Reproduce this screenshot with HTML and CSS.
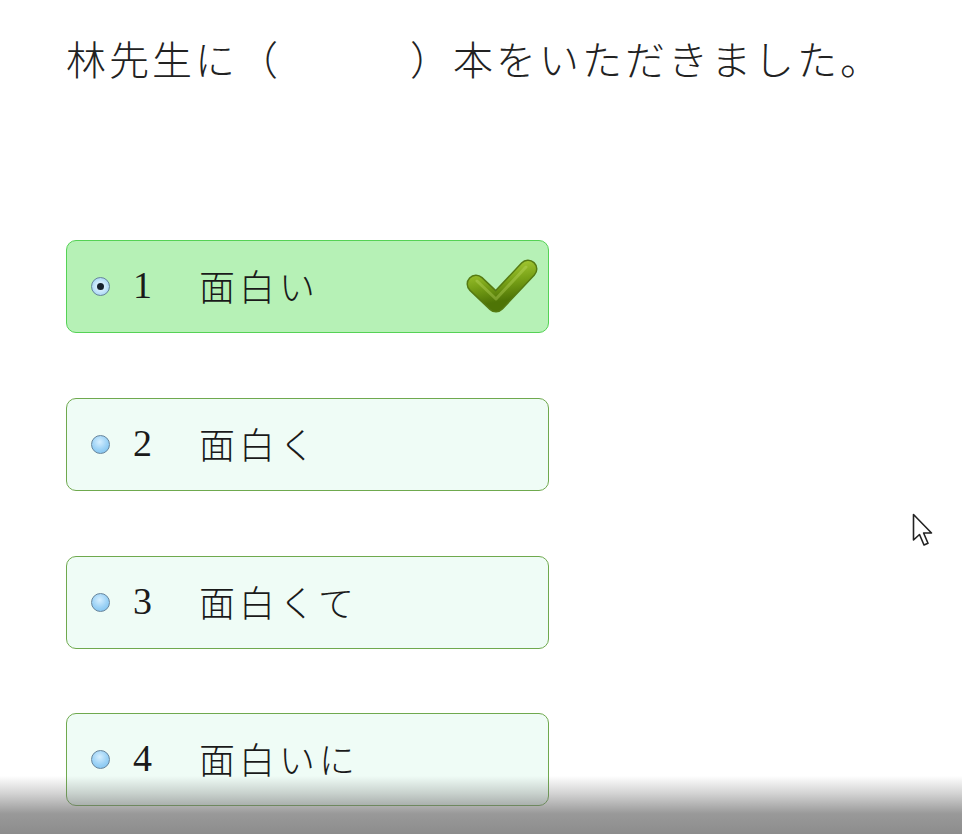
FILE: index.html
```html
<!DOCTYPE html>
<html lang="ja">
<head>
<meta charset="utf-8">
<title>問題</title>
<link rel="stylesheet" href="styles.css">
</head>
<body>
<main class="page">
  <p class="question">林先生に（<span class="blank">　　　</span>）本をいただきました。</p>
  <ol class="options">
    <li class="option correct">
      <span class="radio checked"></span>
      <span class="num">1</span>
      <span class="label">面白い</span>
      <svg class="check" width="76" height="64" viewBox="0 0 76 64">
        <defs>
          <linearGradient id="cg" x1="0" y1="0" x2="0.3" y2="1">
            <stop offset="0" stop-color="#a3c832"/>
            <stop offset="0.5" stop-color="#78a117"/>
            <stop offset="1" stop-color="#4e7406"/>
          </linearGradient>
        </defs>
        <polyline points="12,30 32,49 64,15" fill="none" stroke="#557a12" stroke-width="19" stroke-linecap="round" stroke-linejoin="round"/>
        <polyline points="12,30 32,49 64,15" fill="none" stroke="url(#cg)" stroke-width="16" stroke-linecap="round" stroke-linejoin="round"/>
        <polyline points="13,27 32,45 62,13" fill="none" stroke="#c2e06a" stroke-opacity="0.35" stroke-width="3" stroke-linecap="round" stroke-linejoin="round"/>
      </svg>
    </li>
    <li class="option">
      <span class="radio"></span>
      <span class="num">2</span>
      <span class="label">面白く</span>
    </li>
    <li class="option">
      <span class="radio"></span>
      <span class="num">3</span>
      <span class="label">面白くて</span>
    </li>
    <li class="option">
      <span class="radio"></span>
      <span class="num">4</span>
      <span class="label">面白いに</span>
    </li>
  </ol>
  <svg class="cursor" width="24" height="36" viewBox="0 0 24 36">
    <path d="M1.5,1.5 L1.5,27 L7.5,21.5 L12,32 L16,30.3 L11.6,20 L19.5,20 Z" fill="#fff" stroke="#222" stroke-width="1.6" stroke-linejoin="round"/>
  </svg>
  <div class="shade"></div>
</main>
</body>
</html>
```
FILE: styles.css
```css
html, body {
  margin: 0;
  padding: 0;
  background: #ffffff;
}

.page {
  position: relative;
  width: 962px;
  height: 834px;
  overflow: hidden;
  padding-left: 66px;
  box-sizing: border-box;
  font-family: "Noto Sans CJK JP", "Noto Sans CJK SC", sans-serif;
  color: #1a1a1a;
}

.question {
  margin: 0;
  padding-top: 34px;
  font-size: 40px;
  line-height: 48px;
  letter-spacing: 3px;
  font-weight: 300;
  white-space: nowrap;
  color: #222;
}

.blank {
  display: inline-block;
}

.options {
  list-style: none;
  margin: 158px 0 0 0;
  padding: 0;
  display: flex;
  flex-direction: column;
  gap: 65px;
}

.option {
  position: relative;
  box-sizing: border-box;
  width: 483px;
  height: 93px;
  border: 1.5px solid #6fa94e;
  border-radius: 10px;
  background: #effcf6;
  display: flex;
  align-items: center;
  padding-left: 24px;
  padding-bottom: 4px;
}

.option:nth-child(4) {
  margin-top: -1px;
}

.option.correct {
  background: #b6f1b6;
  border-color: #55d255;
}

.radio {
  width: 19px;
  height: 19px;
  box-sizing: border-box;
  border-radius: 50%;
  border: 1.5px solid #66849c;
  background: radial-gradient(circle at 45% 35%, #d6efff 0%, #9ed3f6 50%, #74bcec 100%);
  margin-top: 4px;
  display: flex;
  align-items: center;
  justify-content: center;
  flex: none;
}

.radio.checked {
  background: radial-gradient(circle at 50% 50%, #eaf6ff 0%, #c9e8fb 45%, #8cc8f0 100%);
}

.radio.checked::after {
  content: "";
  width: 7px;
  height: 7px;
  border-radius: 50%;
  background: #16222e;
}

.num {
  font-family: "Liberation Serif", serif;
  font-size: 38px;
  line-height: 44px;
  margin-left: 23px;
  width: 66px;
  color: #1a1a1a;
}

.label {
  font-size: 36px;
  line-height: 44px;
  letter-spacing: 4px;
  font-weight: 300;
  color: #1a1a1a;
}

.check {
  position: absolute;
  right: 8px;
  top: 13px;
}

.cursor {
  position: absolute;
  left: 912px;
  top: 513px;
}

.shade {
  position: absolute;
  left: 0;
  right: 0;
  bottom: 0;
  height: 58px;
  background: linear-gradient(to bottom, rgba(110,110,110,0) 0%, rgba(110,110,110,0.3) 30%, rgba(110,110,110,0.7) 65%, rgba(120,120,120,0.85) 100%);
  pointer-events: none;
}
```
